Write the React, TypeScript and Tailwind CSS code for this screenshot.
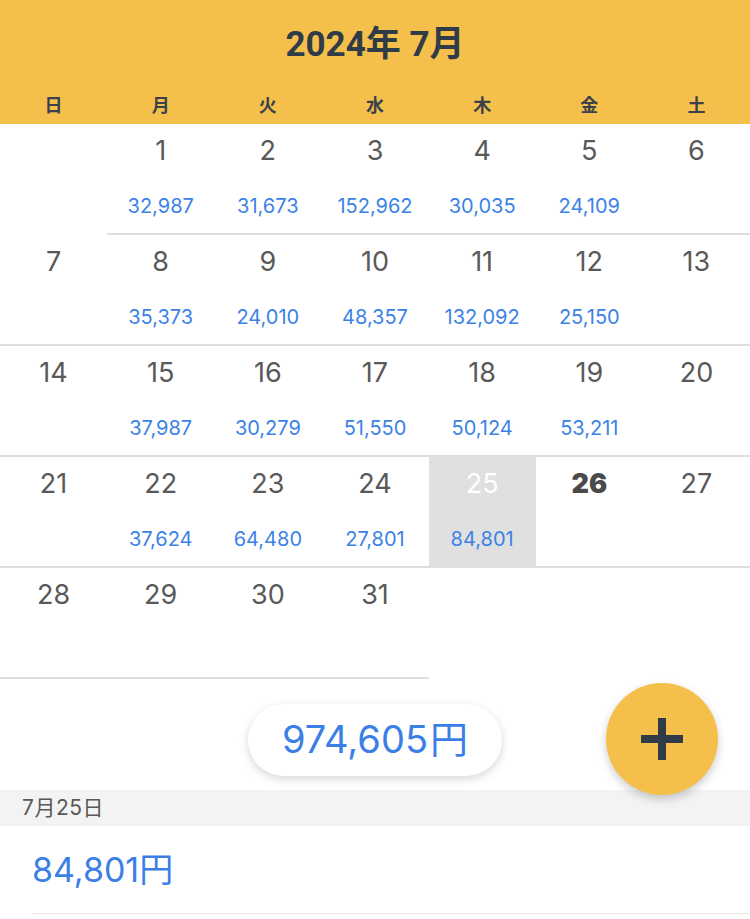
import React from "react";

const WEEK = ["日", "月", "火", "水", "木", "金", "土"];

type Day = { d: number; amt?: string } | null;

const AMOUNTS: Record<number, string> = {
  1: "32,987",
  2: "31,673",
  3: "152,962",
  4: "30,035",
  5: "24,109",
  8: "35,373",
  9: "24,010",
  10: "48,357",
  11: "132,092",
  12: "25,150",
  15: "37,987",
  16: "30,279",
  17: "51,550",
  18: "50,124",
  19: "53,211",
  22: "37,624",
  23: "64,480",
  24: "27,801",
  25: "84,801",
};

function buildCells(): Day[] {
  const cells: Day[] = [null];
  for (let d = 1; d <= 31; d++) cells.push({ d, amt: AMOUNTS[d] });
  while (cells.length % 7 !== 0) cells.push(null);
  return cells;
}

const SELECTED = 25;
const TODAY = 26;

const font = { fontFamily: '"Inter", "Noto Sans CJK JP", sans-serif' };
const titleFont = {
  fontFamily: '"Liberation Sans Narrow", "Roboto", "Noto Sans CJK JP", sans-serif',
};

export default function App() {
  const cells = buildCells();
  return (
    <div className="w-[750px] h-[919px] bg-white overflow-hidden relative" style={font}>
      {/* Month header */}
      <div className="bg-[#F5BF4B] h-[124px] flex flex-col">
        <div
          className="h-[90px] flex items-center justify-center text-[35px] font-bold text-[#2F3B47]"
          style={titleFont}
        >
          2024年 7月
        </div>
        <div className="grid grid-cols-7 flex-1 pb-[4px]">
          {WEEK.map((w) => (
            <div key={w} className="flex items-center justify-center text-[18px] font-bold text-[#3A4149]">
              {w}
            </div>
          ))}
        </div>
      </div>

      {/* Day grid */}
      <div className="grid grid-cols-7">
        {cells.map((c, i) =>
          c ? (
            <div
              key={i}
              className={`h-[111px] border-b-2 border-[#DEDEDE] flex flex-col items-center ${
                c.d === SELECTED ? "bg-[#E0E0E0]" : "bg-white"
              }`}
            >
              <div
                className={`mt-[9px] h-[34px] flex items-center text-[27px] leading-none ${
                  c.d === SELECTED
                    ? "text-white"
                    : c.d === TODAY
                    ? "text-[#4A4A4A] font-black"
                    : "text-[#595959]"
                }`}
              >
                {c.d}
              </div>
              <div className="mt-[28px] h-[22px] flex items-center text-[20px] leading-none text-[#3B82E6]">
                {c.amt ?? ""}
              </div>
            </div>
          ) : (
            <div key={i} className="h-[111px]" />
          )
        )}
      </div>

      {/* Monthly total */}
      <div className="h-[111px] flex items-center justify-center">
        <div className="mt-[10px] h-[72px] w-[254px] rounded-full bg-white shadow-[0_3px_10px_rgba(0,0,0,0.16)] flex items-center justify-center text-[38px] text-[#3B7FE6]">
          974,605<span className="ml-[2px]">円</span>
        </div>
      </div>

      {/* Selected date list */}
      <div className="h-[36px] bg-[#F3F3F3] flex items-center pl-[22px] text-[21px] tracking-[0.5px] text-[#585858]">
        7月25日
      </div>
      <div className="ml-[32px] h-[88px] border-b border-[#E6E6E6] flex items-center text-[34px] text-[#3B7FE6]">
        84,801円
      </div>

      {/* Add button */}
      <button className="absolute left-[606px] top-[683px] w-[112px] h-[112px] rounded-full bg-[#F5BF4B] shadow-[0_4px_10px_rgba(0,0,0,0.2)] flex items-center justify-center">
        <svg width="46" height="46" viewBox="0 0 46 46">
          <rect x="19" y="2" width="8" height="42" fill="#2F3B47" />
          <rect x="2" y="19" width="42" height="8" fill="#2F3B47" />
        </svg>
      </button>
    </div>
  );
}
